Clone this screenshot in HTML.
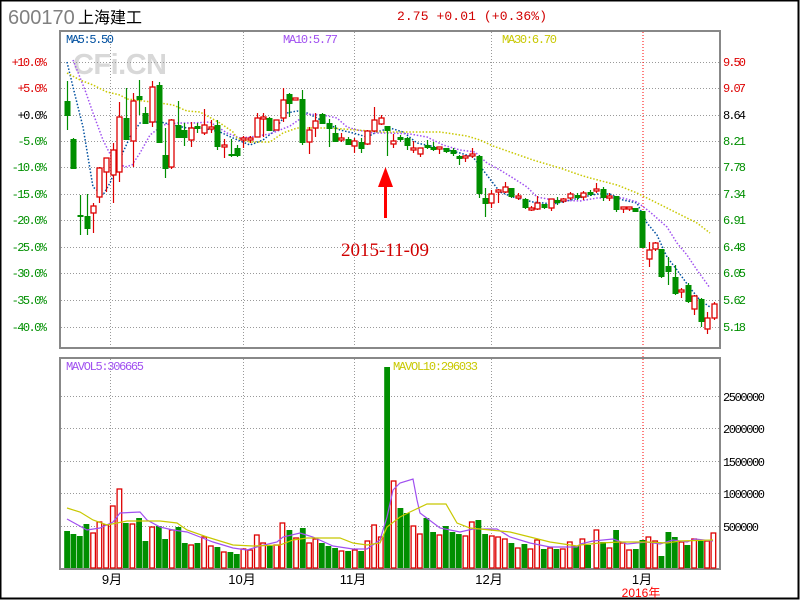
<!DOCTYPE html>
<html><head><meta charset="utf-8"><style>
html,body{margin:0;padding:0;background:#fff;}
#c{position:absolute;left:0;top:0;width:800px;height:600px;}
</style></head><body>
<svg id="c" width="800" height="600" xmlns="http://www.w3.org/2000/svg">
<rect x="0.5" y="0.5" width="798" height="598" fill="#fff" stroke="#000" stroke-width="2"/>
<text x="8" y="24" font-family="Liberation Sans, sans-serif" font-size="20" fill="#808080">600170</text>
<text x="78" y="23" font-family="Liberation Sans, 'Noto Sans CJK SC', sans-serif" font-size="16" fill="#000">上海建工</text>
<text x="397" y="20" font-family="Liberation Mono, monospace" font-size="13" fill="#d00000" textLength="150">2.75 +0.01 (+0.36%)</text>
<text x="73" y="74" font-family="Liberation Sans, sans-serif" font-size="29" font-weight="bold" fill="#d8d8d8" textLength="94">CFi.CN</text>
<g id="g"></g>
<text x="385" y="256" font-family="Liberation Serif, serif" font-size="19" fill="#d00000" text-anchor="middle">2015-11-09</text>
</svg>
<script>
var NS="http://www.w3.org/2000/svg",G=document.getElementById('g');
function el(t,a,txt){var e=document.createElementNS(NS,t);for(var k in a)e.setAttribute(k,a[k]);if(txt)e.textContent=txt;G.appendChild(e);return e;}
var RED="#dd0000",GRN="#008f00";
// grids
var hy=[62,88,115,141,167,194,220,247,273,300,327];
hy.forEach(function(y){el('line',{x1:61,y1:y+.5,x2:720,y2:y+.5,stroke:'#999','stroke-dasharray':'1,2'});});
var vy=[396,428,461,493,526];
vy.forEach(function(y){el('line',{x1:61,y1:y+.5,x2:720,y2:y+.5,stroke:'#999','stroke-dasharray':'1,2'});});
[110,243,354,491].forEach(function(x){
 el('line',{x1:x+.5,y1:32,x2:x+.5,y2:348,stroke:'#999','stroke-dasharray':'1,2'});
 el('line',{x1:x+.5,y1:359,x2:x+.5,y2:569,stroke:'#999','stroke-dasharray':'1,2'});});
el('line',{x1:643,y1:32,x2:643,y2:569,stroke:'#f00','stroke-dasharray':'1,2'});
// frames
el('rect',{x:60,y:31,width:660,height:317,fill:'none',stroke:'#888','stroke-width':2});
el('rect',{x:60,y:358,width:660,height:211,fill:'none',stroke:'#888','stroke-width':2});
// labels
var L=[['+10.0%',RED],['+5.0%',RED],['+0.0%','#000'],['-5.0%',GRN],['-10.0%',GRN],['-15.0%',GRN],['-20.0%',GRN],['-25.0%',GRN],['-30.0%',GRN],['-35.0%',GRN],['-40.0%',GRN]];
var R=[['9.50',RED],['9.07',RED],['8.64','#000'],['8.21',GRN],['7.78',GRN],['7.34',GRN],['6.91',GRN],['6.48',GRN],['6.05',GRN],['5.62',GRN],['5.18',GRN]];
var MF='Liberation Mono, monospace';
hy.forEach(function(y,i){
 el('text',{x:47,y:y+4,'text-anchor':'end','font-family':MF,'font-size':12,fill:L[i][1],textLength:L[i][0].length*5.9},L[i][0]);
 el('text',{x:723,y:y+4,'font-family':MF,'font-size':12,fill:R[i][1],textLength:23},R[i][0]);});
['2500000','2000000','1500000','1000000','500000'].forEach(function(t,i){
 el('text',{x:723,y:vy[i]+5,'font-family':MF,'font-size':12,fill:'#000',textLength:t.length*6},t);});
el('text',{x:66,y:43,'font-family':MF,'font-size':12,fill:'#0050a0',textLength:48},'MA5:5.50');
el('text',{x:283,y:43,'font-family':MF,'font-size':12,fill:'#a050f0',textLength:55},'MA10:5.77');
el('text',{x:502,y:43,'font-family':MF,'font-size':12,fill:'#c8c800',textLength:55},'MA30:6.70');
el('text',{x:66,y:370,'font-family':MF,'font-size':12,fill:'#a050f0',textLength:78},'MAVOL5:306665');
el('text',{x:393,y:370,'font-family':MF,'font-size':12,fill:'#c8c800',textLength:85},'MAVOL10:296033');
var CF='Liberation Sans, "Noto Sans CJK SC", sans-serif';
[['9月',112],['10月',242],['11月',353],['12月',489],['1月',642]].forEach(function(m){
 el('text',{x:m[1],y:584,'text-anchor':'middle','font-family':CF,'font-size':13,fill:'#000'},m[0]);});
el('text',{x:641,y:597,'text-anchor':'middle','font-family':CF,'font-size':12,fill:'#f00'},'2016年');
// MA lines
function pl(pts,col,dash,w){el('polyline',{points:pts,fill:'none',stroke:col,'stroke-width':w||1.5,'stroke-dasharray':dash||''});}
pl("67,62 73,87 83,127 93,187 103,195 110,183 118,163 130,137 140,123 150,122 160,122 165,123 173,125 187,128 203,128 220,132 233,138 250,145 263,140 273,132 287,113 297,111 307,113 317,118 330,125 340,130 353,133 367,137 377,132 390,128 403,132 417,143 440,148 460,153 473,157 483,170 493,183 500,192 513,197 533,202 553,204 567,201 583,197 597,194 610,194 623,200 637,203 647,223 657,235 667,257 677,270 690,288 700,300 710,307","#0050a0","1.5,1.8");
pl("73,60 85,90 93,113 103,140 113,160 125,167 132,165 140,153 150,135 163,125 177,123 193,123 210,122 227,133 240,138 250,137 270,134 290,126 307,114 323,115 337,118 347,127 357,130 373,133 390,133 410,134 427,137 443,145 460,150 475,152 487,163 500,170 513,178 527,187 537,197 553,200 580,201 597,198 623,198 637,202 650,212 667,227 677,243 687,255 697,270 710,288","#a050f0","1.5,1.8");
pl("67,73 80,80 93,85 107,92 120,95 127,99 160,103 173,105 187,111 200,112 220,123 233,132 237,138 250,142 270,142 283,133 297,128 310,128 330,128 357,130 380,132 410,132 440,132 467,136 480,140 493,146 513,153 533,160 560,168 580,175 590,178 617,185 637,193 657,203 677,213 697,223 710,233","#c8c800","1.5,1.8");
// candles
var C=[[66.7,101,115,81,130,'g'],[73.3,139,168,138,169,'g'],[80,215,216,195,235,'g'],[86.7,216,228,194,235,'g'],[92.7,206,213,203,233,'r'],[99.3,168,197,167,203,'r'],[106,158,172,158,192,'r'],[112.7,150,175,143,203,'r'],[119.3,117,172,102,182,'r'],[126,118,139,88,140,'g'],[132.7,101,141,93,167,'r'],[138.7,96,99,80,115,'g'],[145.3,113,123,107,124,'g'],[152,87,122,81,127,'r'],[158.7,85,142,82,143,'g'],[165.3,155,168,128,178,'g'],[171.3,120,167,119,169,'r'],[178,125,137,101,138,'g'],[184,130,137,123,146,'g'],[190.7,128,140,122,147,'r'],[197.3,126,128,123,133,'g'],[204,125,133,109,135,'r'],[210.7,127,129,120,133,'r'],[217.3,125,146,120,150,'g'],[224,145,147,139,158,'r'],[230.7,154,155,139,157,'g'],[236.7,148,155,145,157,'g'],[243.3,138,140,136,148,'r'],[250,138,140,136,143,'r'],[256.7,118,137,113,137,'r'],[263.3,117,119,113,137,'r'],[269.3,118,130,117,131,'g'],[276,120,130,120,130,'r'],[282.7,100,118,88,122,'r'],[288.7,94,103,93,117,'g'],[295.3,98,100,98,100,'r'],[302,99,142,90,145,'g'],[308.7,130,142,127,154,'r'],[315.3,121,128,113,137,'r'],[322,114,123,113,124,'g'],[328.7,123,128,119,147,'g'],[335.3,133,141,125,142,'g'],[341.3,138,140,133,142,'r'],[348,139,144,137,145,'g'],[354,141,146,138,153,'r'],[360.7,142,148,138,153,'g'],[367.3,131,144,130,145,'r'],[374,120,131,107,132,'r'],[380.7,118,124,115,125,'r'],[386.7,126,130,126,156,'g'],[393.3,141,144,134,148,'r'],[400,137,139,135,142,'g'],[406.7,138,145,137,150,'g'],[413.3,148,150,141,153,'r'],[420,148,154,148,157,'r'],[426.7,145,147,140,149,'g'],[432.7,147,149,142,151,'g'],[439.3,147,149,147,154,'r'],[446,148,151,148,153,'g'],[452.7,150,153,148,156,'g'],[459.3,156,158,155,165,'g'],[465.3,156,158,155,162,'r'],[472,154,156,148,158,'r'],[478.7,156,193,155,198,'g'],[485.3,198,203,188,217,'g'],[491.3,194,203,190,208,'r'],[498,190,192,189,203,'r'],[504.7,187,192,182,193,'r'],[511.3,188,196,188,198,'g'],[518,196,198,193,200,'r'],[524.7,199,207,198,209,'g'],[530.7,208,210,206,211,'r'],[537.3,203,209,196,210,'r'],[544,204,207,204,209,'g'],[550.7,199,208,199,211,'r'],[557.3,200,202,197,205,'g'],[563.3,199,201,198,203,'r'],[570,194,198,192,200,'r'],[576.7,195,197,193,200,'g'],[583.3,193,197,191,200,'r'],[590,192,194,190,196,'g'],[596,189,191,183,193,'r'],[602.7,189,197,187,201,'g'],[609.3,196,198,193,201,'r'],[616,196,209,196,212,'g'],[622.7,207,209,207,213,'r'],[629.3,207,209,207,211,'r'],[635.3,208,211,208,212,'g'],[642,211,247,211,248,'g'],[648.7,250,259,242,267,'r'],[655.3,243,249,242,251,'r'],[661.3,249,276,249,278,'g'],[668,266,271,257,285,'g'],[674.7,277,293,265,295,'g'],[681.3,290,292,288,298,'r'],[688,285,301,283,303,'g'],[694,296,309,295,315,'r'],[700.7,299,321,298,327,'g'],[707.3,318,329,312,334,'r'],[714,304,318,302,320,'r']];
C.forEach(function(c){
 var x=Math.round(c[0]),col=c[5]=='r'?RED:GRN;
 el('line',{x1:x+.5,y1:c[3],x2:x+.5,y2:c[4],stroke:col,'stroke-width':1.2});
 var h=Math.max(c[2]-c[1],1);
 if(c[5]=='r')el('rect',{x:x-2,y:c[1],width:5,height:h,fill:'#fff',stroke:col,'stroke-width':1.3});
 else el('rect',{x:x-2.5,y:c[1],width:6,height:h+1,fill:col});
});
// volume
var V=[[67,531,'g'],[73.3,534,'g'],[79.7,536,'g'],[86.3,524,'g'],[93,533,'r'],[99.3,522,'r'],[106,525,'r'],[112.7,506,'r'],[119.3,489,'r'],[125.7,523,'g'],[132.3,524,'r'],[139,518,'g'],[145.3,541,'g'],[152,527,'r'],[158.7,526,'g'],[165,539,'g'],[171.7,530,'r'],[178.3,527,'g'],[184.7,543,'g'],[191,545,'r'],[197.3,543,'g'],[204,537,'r'],[210.7,546,'r'],[217.3,547,'g'],[223.7,552,'r'],[230.3,552,'g'],[236.7,554,'g'],[243.3,549,'r'],[250,550,'r'],[256.7,535,'r'],[263,543,'r'],[269.7,546,'g'],[276.3,545,'r'],[282.3,523,'r'],[289.3,530,'g'],[296,538,'r'],[302.7,528,'g'],[309,543,'r'],[315.3,539,'r'],[321.7,543,'g'],[328.3,546,'g'],[335,548,'g'],[341.3,551,'r'],[348,551,'g'],[354.7,550,'r'],[361,551,'g'],[367.3,541,'r'],[374,525,'r'],[380.7,537,'r'],[387,367,'g'],[393.5,481,'r'],[400.3,508,'g'],[406.7,513,'g'],[413.3,526,'r'],[419.7,534,'r'],[426.3,518,'g'],[433,532,'g'],[439.3,535,'r'],[445.7,526,'g'],[452.3,532,'g'],[458.7,534,'g'],[465.3,536,'r'],[471.7,522,'r'],[478.3,520,'g'],[485,534,'g'],[491.7,536,'r'],[498,537,'r'],[504.7,539,'r'],[511.3,543,'g'],[517.7,548,'r'],[524.3,544,'g'],[530.3,549,'r'],[537,540,'r'],[543.7,549,'g'],[550,548,'r'],[556.3,549,'g'],[562.7,549,'r'],[569.7,542,'r'],[576,546,'g'],[582.3,539,'r'],[588,545,'g'],[596.3,530,'r'],[603,542,'g'],[609.3,548,'r'],[616,530,'g'],[622.3,543,'r'],[629,550,'r'],[635.7,549,'g'],[642.3,540,'g'],[648.3,537,'r'],[655,541,'r'],[661.3,556,'g'],[668.3,532,'g'],[674.7,537,'g'],[681.3,542,'r'],[687.3,545,'g'],[694,539,'r'],[700.7,541,'g'],[707,541,'r'],[713.3,533,'r']];
V.forEach(function(v){
 var x=v[0];
 if(v[2]=='r')el('rect',{x:x-2.2,y:v[1],width:4.6,height:568-v[1],fill:'#fff',stroke:RED,'stroke-width':1.3});
 else el('rect',{x:x-2.8,y:v[1],width:5.8,height:568-v[1],fill:GRN});
});
pl("67,519 87,530 100,528 113,522 120,513 140,512 147,520 160,527 173,530 187,532 200,537 213,542 233,548 247,550 260,546 277,542 283,537 300,533 313,537 333,546 353,549 367,549 380,540 387,517 393,490 400,483 413,479 417,500 420,513 440,528 460,532 473,529 497,529 510,537 530,543 550,547 577,547 580,544 593,541 613,539 627,544 647,542 660,544 673,540 687,542 695,539 713,541","#a050f0","",1.2);
pl("67,508 80,512 93,520 107,525 127,521 160,521 177,523 187,530 207,537 233,545 253,546 280,545 293,540 307,538 340,538 353,543 367,545 380,543 387,527 400,517 410,512 427,504 446,504 457,523 470,528 490,530 510,532 530,537 550,542 577,546 580,545 600,543 620,542 647,542 667,543 680,541 713,540","#c8c800","",1.2);
// arrow
el('rect',{x:384,y:180,width:3,height:38,fill:'#f00'});
el('polygon',{points:'385.5,167 378,187 393,187',fill:'#f00'});
</script>
</body></html>
